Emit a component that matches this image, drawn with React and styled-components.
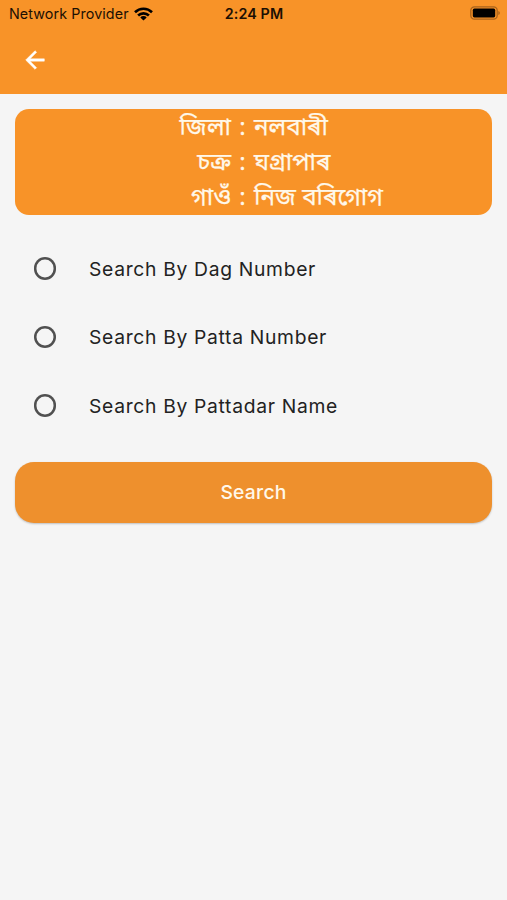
import { useState } from "react";
import styled, { createGlobalStyle } from "styled-components";

const GlobalStyle = createGlobalStyle`
  * {
    box-sizing: border-box;
  }
  body {
    margin: 0;
    background: #f5f5f5;
    font-family: Inter, "Noto Sans", sans-serif;
  }
`;

const Screen = styled.div`
  width: 100%;
  min-height: 100vh;
  background: #f5f5f5;
`;

const Header = styled.header`
  height: 94px;
  background: #f89328;
`;

const StatusBar = styled.div`
  display: grid;
  grid-template-columns: 1fr auto 1fr;
  align-items: center;
  height: 27px;
  padding: 0 7px 0 9px;
  color: #1c1003;
`;

const Carrier = styled.div`
  display: flex;
  align-items: center;
  gap: 5px;
  font-size: 14.3px;
  line-height: 27px;
  letter-spacing: 0.1px;
`;

const Clock = styled.div`
  padding-right: 1px;
  font-size: 14.3px;
  font-weight: 600;
  line-height: 27px;
  letter-spacing: 0.1px;
`;

const Battery = styled.svg`
  justify-self: end;
  margin-bottom: 1px;
`;

const AppBar = styled.div`
  display: flex;
  align-items: center;
  height: 66px;
  padding-left: 21px;
`;

const BackButton = styled.button`
  display: flex;
  padding: 0;
  border: none;
  background: none;
  cursor: pointer;
`;

const Content = styled.main`
  padding: 14.5px 15px 0;
`;

const Location = styled.div`
  display: grid;
  grid-template-columns: 216px 23px 1fr;
  grid-auto-rows: 35.3px;
  height: 106px;
  border-radius: 14px;
  background: #f89328;
  color: #fff8ea;
  font-family: "Noto Sans", "Noto Sans Bengali", sans-serif;
  font-size: 24.2px;
  line-height: 33px;
  white-space: nowrap;
  -webkit-text-stroke: 0.25px #fff8ea;
`;

const Label = styled.span`
  text-align: right;
`;

const Colon = styled.span`
  text-align: center;
`;

const Options = styled.div`
  padding: 19.5px 0 22px 18.5px;
`;

const Option = styled.label`
  display: flex;
  align-items: center;
  height: 68.5px;
  gap: 33px;
  color: #222;
  font-size: 19.3px;
  line-height: 24px;
  letter-spacing: 0.68px;
  cursor: pointer;
`;

const OptionText = styled.span`
  padding-top: 1px;
`;

const Radio = styled.input`
  appearance: none;
  width: 22.5px;
  height: 22.5px;
  margin: 0;
  border-radius: 50%;
  box-shadow: inset 0 0 0 2.5px #505050;

  &:checked {
    background: radial-gradient(#f89328 40%, transparent 44%);
  }
`;

const SearchButton = styled.button`
  display: block;
  width: 100%;
  height: 61px;
  border: none;
  border-radius: 19px;
  background: #ee902d;
  box-shadow: 0 1px 2px rgba(0, 0, 0, 0.22);
  color: #fff8ea;
  font-family: inherit;
  font-size: 19.3px;
  font-weight: 500;
  letter-spacing: 0.25px;
  cursor: pointer;
`;

const location = [
  { label: "জিলা", value: "নলবাৰী" },
  { label: "চক্ৰ", value: "ঘগ্ৰাপাৰ" },
  { label: "গাওঁ", value: "নিজ বৰিগোগ" },
];

const options = [
  "Search By Dag Number",
  "Search By Patta Number",
  "Search By Pattadar Name",
];

const App = () => {
  const [selected, setSelected] = useState("");

  return (
    <Screen>
      <GlobalStyle />
      <Header>
        <StatusBar>
          <Carrier>
            Network Provider
            <svg width="19" height="14" viewBox="0 0 19 14">
              <g fill="none" stroke="#000" strokeWidth="2.6">
                <path d="M1 5.2a12.2 12.2 0 0 1 17 0" />
                <path d="M4.1 8.5a7.8 7.8 0 0 1 10.8 0" />
              </g>
              <path d="M6.3 10.4a4.6 4.6 0 0 1 6.4 0L9.5 13.6z" />
            </svg>
          </Carrier>
          <Clock>2:24 PM</Clock>
          <Battery width="30" height="14" viewBox="0 0 30 14">
            <rect x="0.8" y="0.8" width="26.4" height="12.4" rx="3.6" fill="none" stroke="#a8631b" strokeWidth="1.3" />
            <rect x="2.8" y="2.6" width="22.4" height="8.8" rx="1.6" />
            <path d="M28.3 5q1.6.7 1.6 2t-1.6 2z" fill="#a8631b" />
          </Battery>
        </StatusBar>
        <AppBar>
          <BackButton aria-label="Back">
            <svg width="28" height="28" viewBox="0 0 24 24" fill="#fff" stroke="#fff" strokeWidth="0.4">
              <path d="M20 11H7.83l5.59-5.59L12 4l-8 8 8 8 1.41-1.41L7.83 13H20v-2z" />
            </svg>
          </BackButton>
        </AppBar>
      </Header>
      <Content>
        <Location>
          {location.map(({ label, value }) => [
            <Label key={label}>{label}</Label>,
            <Colon key={label + ":"}>:</Colon>,
            <span key={value}>{value}</span>,
          ])}
        </Location>
        <Options>
          {options.map((option) => (
            <Option key={option}>
              <Radio
                type="radio"
                name="search"
                checked={selected === option}
                onChange={() => setSelected(option)}
              />
              <OptionText>{option}</OptionText>
            </Option>
          ))}
        </Options>
        <SearchButton>Search</SearchButton>
      </Content>
    </Screen>
  );
};

export default App;
